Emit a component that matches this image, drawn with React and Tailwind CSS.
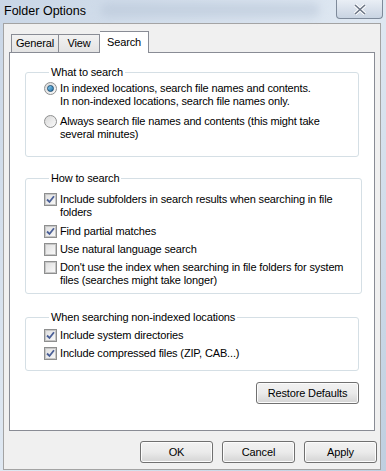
import React from "react";

const font = { fontFamily: '"Liberation Sans", Arial, sans-serif' };

function Radio({ checked }) {
  return (
    <span className="flex h-[13px] w-[13px] shrink-0 items-center justify-center rounded-full border border-[#8e8f8f] bg-gradient-to-br from-[#d8d8d8] to-[#fbfbfb]">
      {checked && (
        <span className="h-[7px] w-[7px] rounded-full border border-[#1c4e73] bg-gradient-to-br from-[#8ad1f5] to-[#1d6fa5]" />
      )}
    </span>
  );
}

function Check({ checked }) {
  return (
    <span className="flex h-[13px] w-[13px] shrink-0 items-center justify-center border border-[#8e8f8f] bg-white">
      <span className="flex h-[11px] w-[11px] items-center justify-center border border-[#c6c6c6] bg-gradient-to-br from-[#e0e0e0] to-[#f8f8f8]">
        {checked && (
          <svg width="9" height="9" viewBox="0 0 9 9">
            <path d="M1 4.5 L3.5 7 L8 1.2" fill="none" stroke="#4a5f97" strokeWidth="1.8" />
          </svg>
        )}
      </span>
    </span>
  );
}

function Group({ title, children, className }) {
  return (
    <fieldset className={`mx-[15px] rounded-[3px] border border-[#d5dfe5] px-[18px] ${className}`}>
      <legend className="ml-[5px] whitespace-nowrap px-[2px] leading-[14px]">{title}</legend>
      {children}
    </fieldset>
  );
}

function Option({ kind, checked, children }) {
  return (
    <div className="flex items-start gap-[2px] leading-[13px]">
      {kind === "radio" ? <Radio checked={checked} /> : <Check checked={checked} />}
      <div className="whitespace-nowrap pl-[1px]">{children}</div>
    </div>
  );
}

function Btn({ children, className }) {
  return (
    <button className={`h-[22px] rounded-[3px] border border-[#707070] bg-gradient-to-b from-[#f2f2f2] via-[#ebebeb] to-[#d4d4d4] text-[11px] tracking-[-0.15px] text-black shadow-[inset_0_0_0_1px_#fcfcfc] ${className}`}>
      {children}
    </button>
  );
}

export default function App() {
  return (
    <div
      style={font}
      className="flex h-[471px] w-[386px] flex-col overflow-hidden bg-gradient-to-br from-[#c9d6e6] via-[#dfe8f2] to-[#bfcfe0] text-[11px] tracking-[-0.15px] text-black"
    >
      {/* title bar */}
      <div className="relative flex h-[23px] shrink-0 items-center pl-[4px]">
        <span className="text-[12.5px] tracking-normal">Folder Options</span>
        <div className="absolute left-[100px] top-[3px] h-[14px] w-[220px] rounded-full bg-[#b6c4d6] opacity-50 blur-[4px]" />
        <div className="absolute right-[3px] top-0 flex h-[19px] w-[47px] items-center justify-center rounded-b-[4px] border border-t-0 border-[#7e8a9a] bg-gradient-to-b from-[#e9eef5] to-[#c9d4e2]">
          <svg width="14" height="11" viewBox="0 0 14 11">
            <path d="M2 1 L12 10 M12 1 L2 10" stroke="#fff" strokeWidth="3.4" />
            <path d="M2 1 L12 10 M12 1 L2 10" stroke="#6b7585" strokeWidth="1.6" />
          </svg>
        </div>
      </div>

      {/* dialog body */}
      <div className="mb-[1px] ml-[3px] mr-[5px] flex flex-1 flex-col border border-[#a3a3a3] bg-[#f0f0f0]">
        {/* tabs */}
        <div className="flex h-[28px] items-end pl-[7px] pt-[8px]">
          <div className="flex h-[18px] w-[48px] items-center justify-center border border-b-0 border-[#898c95] bg-gradient-to-b from-[#f2f2f2] to-[#e3e3e3]">
            General
          </div>
          <div className="flex h-[18px] w-[41px] items-center justify-center border border-b-0 border-l-0 border-[#898c95] bg-gradient-to-b from-[#f2f2f2] to-[#e3e3e3]">
            View
          </div>
          <div className="relative -mb-px flex h-[22px] w-[49px] items-start justify-center border border-b-0 border-l-0 border-[#898c95] bg-white pt-[2px]">
            Search
          </div>
        </div>

        {/* tab panel */}
        <div className="ml-[5px] mr-[5px] flex h-[379px] flex-col border border-[#898c95] bg-white pt-[12px]">
          <Group title="What to search" className="pb-[15px] pt-[3px]">
            <div className="flex flex-col gap-[7px]">
              <Option kind="radio" checked>
                In indexed locations, search file names and contents.
                <br />
                In non-indexed locations, search file names only.
              </Option>
              <Option kind="radio">
                Always search file names and contents (this might take
                <br />
                several minutes)
              </Option>
            </div>
          </Group>

          <Group title="How to search" className="mt-[14px] pb-[6px] pt-[8px]">
            <div className="flex flex-col gap-[5px]">
              <div className="mb-[1px]">
                <Option kind="check" checked>
                  Include subfolders in search results when searching in file
                  <br />
                  folders
                </Option>
              </div>
              <Option kind="check" checked>
                Find partial matches
              </Option>
              <Option kind="check">Use natural language search</Option>
              <Option kind="check">
                Don't use the index when searching in file folders for system
                <br />
                files (searches might take longer)
              </Option>
            </div>
          </Group>

          <Group title="When searching non-indexed locations" className="mt-[16px] pb-[10px] pt-[5px]">
            <div className="flex flex-col gap-[5px]">
              <Option kind="check" checked>
                Include system directories
              </Option>
              <Option kind="check" checked>
                Include compressed files (ZIP, CAB...)
              </Option>
            </div>
          </Group>

          <div className="mr-[15px] mt-[11px] flex justify-end">
            <Btn className="w-[103px]">Restore Defaults</Btn>
          </div>
        </div>

        {/* footer buttons */}
        <div className="mr-[3px] mt-[10px] flex justify-end gap-[9px]">
          <Btn className="w-[73px]">OK</Btn>
          <Btn className="w-[73px]">Cancel</Btn>
          <Btn className="w-[73px]">Apply</Btn>
        </div>
      </div>
    </div>
  );
}
